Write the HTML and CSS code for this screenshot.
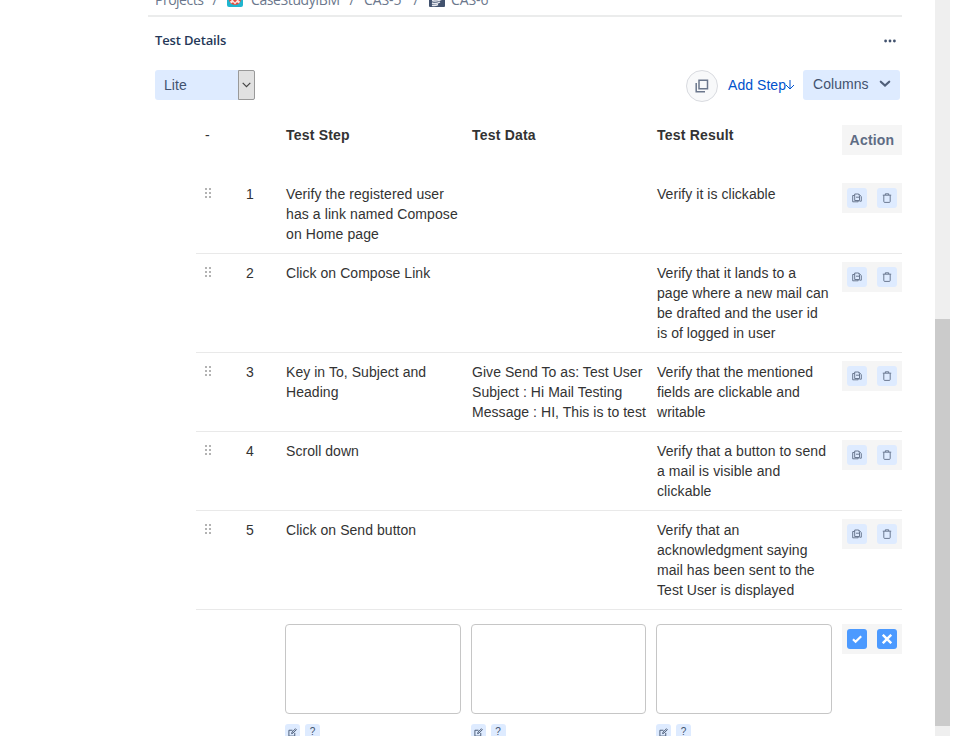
FILE: index.html
```
<!DOCTYPE html>
<html lang="en">
<head>
<meta charset="utf-8">
<title>Test Details</title>
<link rel="stylesheet" href="styles.css">
</head>
<body>
<svg class="defs" width="0" height="0">
  <symbol id="copy" viewBox="0 0 10 10"><path d="M2.500 2.500H.7v6.300h5.500V8M2.700 7.500V1h3.100l1.700 1.700v4.800z" fill="none" stroke="currentColor" stroke-width=".9"/><path d="M6.500.8l2.800 2.700v4.700H7.500M4 4.200h3.300" fill="none" stroke="currentColor" stroke-width=".9"/></symbol>
  <symbol id="trash" viewBox="0 0 10 10"><path d="M.8 2.200h8.400M3.300 2V.8h3.400V2M1.800 2.400v6.100q0 .9.900.9h4.600q.9 0 .9-.9V2.400" fill="none" stroke="currentColor" stroke-width=".9"/></symbol>
  <symbol id="edit" viewBox="0 0 10 10"><path d="M5 2.500H1v6.500h6.500V5.500M4 6.300l.4-1.700L8.300.9l1 1-3.800 3.800z" fill="none" stroke="currentColor" stroke-width="1"/></symbol>
  <symbol id="drag" viewBox="0 0 8 10"><path d="M1 0h2v2H1zM5 0h2v2H5zM1 4h2v2H1zM5 4h2v2H5zM1 8h2v2H1zM5 8h2v2H5z" fill="currentColor"/></symbol>
</svg>
<div class="page">
  <main class="panel">
    <nav class="crumbs">
      <span class="first">Projects</span><span class="sep">/</span>
      <svg class="project-icon" viewBox="0 0 16 16"><rect width="16" height="16" rx="2" fill="#1fb5cf"/><circle cx="8" cy="8" r="6" fill="#e5493a"/><path d="M3 10.500l2.500-2 2.500 3 2.500-3 2.500 2-1 2-2-1.200L8 13.500l-2-2.200-2 1.200z" fill="#f8e4e0"/></svg>
      <span class="project">CaseStudyIBM</span><span class="sep">/</span>
      <span class="parent">CAS-5</span><span class="sep">/</span>
      <svg class="type-icon" viewBox="0 0 16 16"><rect width="16" height="16" rx="1" fill="#42526e"/><path d="M3 9.500q6 1.500 10-1.500M3 12q4 1.500 8-1M3 14.200q3 .8 6-.7" fill="none" stroke="#e8eaf0" stroke-width="1.400"/></svg>
      <span class="issue">CAS-6</span>
    </nav>
    <header class="title-row">
      <h1>Test Details</h1>
      <svg width="12" height="4" viewBox="0 0 12 4" fill="#42526e"><circle cx="1.600" cy="2" r="1.400"/><circle cx="6" cy="2" r="1.400"/><circle cx="10.400" cy="2" r="1.400"/></svg>
    </header>
    <div class="toolbar">
      <div class="select"><span>Lite</span><i><svg width="9" height="6" viewBox="0 0 9 6"><path d="M.7.8l3.800 3.800L8.300.8" fill="none" stroke="#444" stroke-width="1.200"/></svg></i></div>
      <button class="round"><svg width="14" height="14" viewBox="0 0 14 14" fill="none" stroke="#6b778c" stroke-width="1.500"><path d="M4 1.300h8.500v8.500H4z"/><path d="M1.200 4v8.700H10"/></svg></button>
      <a class="add">Add Step<svg width="10" height="10" viewBox="0 0 10 10"><path d="M5 0v8.800M1 5l4 4 4-4" fill="none" stroke="#0052cc" stroke-width="1"/></svg></a>
      <button class="columns">Columns<svg width="12" height="8" viewBox="0 0 12 8"><path d="M1.800 1.700L6 5.500l4.200-3.800" fill="none" stroke="#505f79" stroke-width="2.200" stroke-linecap="round"/></svg></button>
    </div>
    <section class="steps">
      <div class="row head"><span class="dash">-</span><span></span><span>Test Step</span><span>Test Data</span><span>Test Result</span><span class="action-head">Action</span></div>
      <div class="row"><svg class="drag"><use href="#drag"/></svg><span class="num">1</span><p class="wide">Verify the registered user<br>has a link named Compose<br>on Home page</p><p></p><p>Verify it is clickable</p><div class="actions"><button><svg><use href="#copy"/></svg></button><button><svg><use href="#trash"/></svg></button></div></div>
      <div class="row"><svg class="drag"><use href="#drag"/></svg><span class="num">2</span><p>Click on Compose Link</p><p></p><p>Verify that it lands to a<br>page where a new mail can<br>be drafted and the user id<br>is of logged in user</p><div class="actions"><button><svg><use href="#copy"/></svg></button><button><svg><use href="#trash"/></svg></button></div></div>
      <div class="row"><svg class="drag"><use href="#drag"/></svg><span class="num">3</span><p>Key in To, Subject and<br>Heading</p><p>Give Send To as: Test User<br>Subject : Hi Mail Testing<br>Message : HI, This is to test</p><p>Verify that the mentioned<br>fields are clickable and<br>writable</p><div class="actions"><button><svg><use href="#copy"/></svg></button><button><svg><use href="#trash"/></svg></button></div></div>
      <div class="row"><svg class="drag"><use href="#drag"/></svg><span class="num">4</span><p>Scroll down</p><p></p><p class="wide">Verify that a button to send<br>a mail is visible and<br>clickable</p><div class="actions"><button><svg><use href="#copy"/></svg></button><button><svg><use href="#trash"/></svg></button></div></div>
      <div class="row"><svg class="drag"><use href="#drag"/></svg><span class="num">5</span><p>Click on Send button</p><p></p><p>Verify that an<br>acknowledgment saying<br>mail has been sent to the<br>Test User is displayed</p><div class="actions"><button><svg><use href="#copy"/></svg></button><button><svg><use href="#trash"/></svg></button></div></div>
      <div class="new-row">
        <div class="field"><textarea></textarea><div class="tools"><b><svg><use href="#edit"/></svg></b><b>?</b></div></div>
        <div class="field"><textarea></textarea><div class="tools"><b><svg><use href="#edit"/></svg></b><b>?</b></div></div>
        <div class="field"><textarea></textarea><div class="tools"><b><svg><use href="#edit"/></svg></b><b>?</b></div></div>
        <div class="actions confirm"><button><svg viewBox="0 0 10 10"><path d="M1 5.300l2.600 2.500L9.200 2.300" fill="none" stroke="#fff" stroke-width="2.200"/></svg></button><button><svg viewBox="0 0 10 10"><path d="M.8.800l8.400 8.400M9.200.800L.8 9.200" fill="none" stroke="#fff" stroke-width="2.400"/></svg></button></div>
      </div>
    </section>
  </main>
  <aside class="scrollbar"><div class="thumb"></div></aside>
</div>
</body>
</html>
```
FILE: styles.css
```
* { box-sizing: border-box; }
body { margin: 0; height: 736px; overflow: hidden; background: #fff; font: 14px/20px "Liberation Sans", Arial, sans-serif; color: #333; letter-spacing: 0.05px; }
p { margin: 0; white-space: nowrap; }
p.wide { letter-spacing: 0.09px; }
button { border: 0; padding: 0; font: inherit; letter-spacing: inherit; }
.defs { display: block; height: 0; }
.page { display: flex; height: 736px; overflow: hidden; }
.panel { width: 754px; margin-left: 148px; flex: none; }
.scrollbar { width: 15px; margin-left: 33px; height: 736px; background: #efefef; padding-top: 319px; }
.thumb { height: 407px; background: #cbcbcb; }

.crumbs { height: 17px; border-bottom: 2px solid #ebecec; padding-left: 7px; display: flex; align-items: flex-end; overflow: hidden; font: 14px/20px "Open Sans", "Noto Sans", sans-serif; color: #6b778c; letter-spacing: -0.1px; }
.crumbs span { margin-bottom: 5px; flex: none; white-space: nowrap; }
.crumbs .first { width: 48px; letter-spacing: -0.5px; }
.crumbs .sep { width: 24px; text-align: center; }
.crumbs svg { width: 16px; height: 16px; flex: none; margin-bottom: 8px; }
.crumbs .project { margin-left: 8px; width: 89px; letter-spacing: -0.4px; }
.crumbs .parent { width: 40px; }
.crumbs .type-icon { margin-left: 1px; }
.crumbs .issue { margin-left: 6px; }

.title-row { height: 47px; display: flex; justify-content: space-between; align-items: center; padding: 0 6px 0 7px; }
.title-row h1 { margin: -2px 0 0; font: 600 13px/20px "Open Sans", "Noto Sans", sans-serif; color: #253858; letter-spacing: -0.15px; }

.toolbar { height: 40px; margin-top: 4px; display: flex; align-items: flex-start; padding: 2px 2px 0 7px; color: #42526e; }
.select { width: 100px; height: 30px; display: flex; background: #deebff; border-radius: 3px; line-height: 30px; }
.select span { flex: 1; padding-left: 9px; }
.select i { width: 17px; border: 1px solid #999; background: #e1e1e1; display: grid; place-items: center; border-radius: 0 2px 2px 0; }
.round { width: 32px; height: 32px; margin-left: auto; border: 1px solid #d9dbe0; border-radius: 50%; background: #f8f9fa; display: grid; place-items: center; }
.add { margin-left: 10px; width: 75px; line-height: 30px; color: #0052cc; display: flex; align-items: center; white-space: nowrap; }
.add svg { flex: none; margin-left: -1px; }
.columns { width: 97px; height: 30px; background: #deebff; border-radius: 3px; color: #42526e; display: flex; align-items: center; justify-content: space-between; padding: 0 9px 2px 10px; }

.steps { margin-left: 48px; width: 706px; }
.row { display: grid; grid-template-columns: 50px 40px 186px 185px 185px 60px; padding: 9px 0; border-bottom: 1px solid #e9e9e9; align-items: start; }
.row.head { height: 67px; padding: 17px 0 0; border: 0; font-weight: 700; letter-spacing: 0.2px; }
.dash { padding-left: 9px; font-weight: 400; }
.action-head { height: 30px; background: #f5f5f5; text-align: center; line-height: 30px; color: #5e6c84; }
.drag { width: 8px; height: 10px; margin: 4px 0 0 8px; color: #b3b3b3; }
.actions { width: 60px; height: 30px; margin-top: -1px; background: #f5f5f5; display: flex; gap: 10px; padding: 5px; }
.actions button { width: 20px; height: 20px; border-radius: 3px; background: #deebff; color: #5e6c84; display: grid; place-items: center; }
.actions svg { width: 10px; height: 10px; }
.new-row { display: flex; gap: 10px; padding: 14px 0 0 89px; }
.field { width: 176px; margin-right: -0.5px; }
.field textarea { display: block; width: 175.5px; height: 90px; border: 1px solid #c6c6c6; border-radius: 4px; resize: none; margin: 0; }
.tools { display: flex; gap: 5px; margin-top: 10px; }
.tools b { width: 15px; height: 16px; border-radius: 3px; background: #deebff; color: #42526e; font-size: 10px; line-height: 16px; font-weight: 400; display: grid; place-items: center; }
.tools svg { width: 9px; height: 9px; }
.actions.confirm { margin: 0 0 0 auto; }
.confirm button { background: #4c9aff; }
```
